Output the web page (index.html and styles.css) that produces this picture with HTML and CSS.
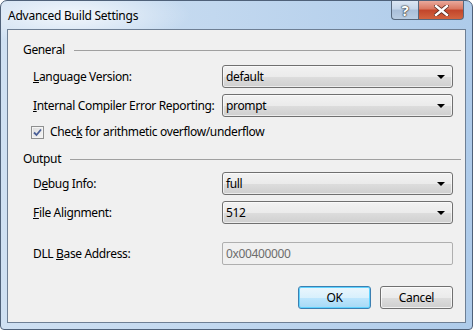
FILE: index.html
```html
<!DOCTYPE html>
<html lang="en">
<head>
    <meta charset="UTF-8">
    <title>Advanced Build Settings</title>
    <link rel="stylesheet" href="styles.css">
</head>
<body>

<div class="window">
    <div class="titlebar">
        <span class="title">Advanced Build Settings</span>
        <div class="caption-buttons">
            <span class="cap-btn help">?</span>
            <span class="cap-btn close">
                <svg width="15" height="11" viewBox="0 0 15 11">
                    <path d="M2 1 L13 10 M13 1 L2 10" stroke="#5a2a20" stroke-width="4" stroke-linecap="square"/>
                    <path d="M2 1 L13 10 M13 1 L2 10" stroke="#ffffff" stroke-width="2.4" stroke-linecap="square"/>
                </svg>
            </span>
        </div>
    </div>

    <div class="client">
        <div class="group-head general">
            <span>General</span>
            <div class="rule"></div>
        </div>

        <div class="row first">
            <label><u>L</u>anguage Version:</label>
            <div class="combo"><span>default</span><i class="arrow"></i></div>
        </div>

        <div class="row">
            <label><u>I</u>nternal Compiler Error Reporting:</label>
            <div class="combo"><span>prompt</span><i class="arrow"></i></div>
        </div>

        <div class="check-row">
            <span class="checkbox">
                <svg width="9" height="9" viewBox="0 0 9 9">
                    <path d="M1 4.5 L3.5 7 L8 1.5" fill="none" stroke="#4a5f97" stroke-width="1.8"/>
                </svg>
            </span>
            <label>Chec<u>k</u> for arithmetic overflow/underflow</label>
        </div>

        <div class="group-head output">
            <span>Output</span>
            <div class="rule"></div>
        </div>

        <div class="row first-out">
            <label>D<u>e</u>bug Info:</label>
            <div class="combo"><span>full</span><i class="arrow"></i></div>
        </div>

        <div class="row">
            <label><u>F</u>ile Alignment:</label>
            <div class="combo"><span>512</span><i class="arrow"></i></div>
        </div>

        <div class="row dll">
            <label>DLL <u>B</u>ase Address:</label>
            <div class="textbox">0x00400000</div>
        </div>

        <div class="buttons">
            <button class="btn default">OK</button>
            <button class="btn">Cancel</button>
        </div>
    </div>
</div>

</body>
</html>
```

FILE: styles.css
```css
body {
    margin: 0;
    width: 473px;
    height: 330px;
    overflow: hidden;
    font-family: "Noto Sans", "Open Sans", sans-serif;
    font-size: 12px;
    letter-spacing: -0.35px;
    line-height: 16px;
    color: #000;
    background: #fff;
}

.window {
    box-sizing: border-box;
    width: 473px;
    height: 330px;
    border: 1px solid #4f6179;
    border-radius: 7px 7px 4px 4px;
    background:
        radial-gradient(ellipse 120px 30px at 70px 14px, rgba(255, 255, 255, 0.75), rgba(255, 255, 255, 0) 100%),
        linear-gradient(to right, #cfe0f2 0%, #c2d8ef 45%, #aecbea 100%);
    display: flex;
    flex-direction: column;
    padding: 0 6px 6px 6px;
}

.titlebar {
    height: 28px;
    display: flex;
    align-items: flex-start;
    justify-content: space-between;
}

.title {
    margin-top: 7px;
    margin-left: 1px;
    letter-spacing: -0.25px;
}

.caption-buttons {
    display: flex;
    margin-right: 2px;
}

.cap-btn {
    box-sizing: border-box;
    height: 19px;
    display: flex;
    align-items: center;
    justify-content: center;
    border: 1px solid #57687d;
    border-top: none;
}

.help {
    width: 27px;
    border-radius: 0 0 0 4px;
    border-right: none;
    background: linear-gradient(to bottom, #dbe6f3 0%, #c5d6ea 45%, #a9bfd9 50%, #b9cde3 100%);
    color: #fff;
    font-weight: bold;
    font-size: 15px;
    text-shadow: 0 0 1px #333, 0 0 1px #333, 0 0 2px #333;
}

.close {
    width: 46px;
    border-radius: 0 0 4px 0;
    background: linear-gradient(to bottom, #e9a99c 0%, #d9765f 45%, #c2452a 50%, #d36440 100%);
}

.client {
    flex: 1;
    box-sizing: border-box;
    border: 1px solid #6e7f94;
    background: #f0f0f0;
    padding: 0 12px 0 0;
    display: flex;
    flex-direction: column;
}

.group-head {
    display: flex;
    align-items: center;
    padding-left: 15px;
    height: 16px;
}

.group-head.general {
    margin-top: 12px;
}

.group-head.output {
    margin-top: 11px;
}

.rule {
    flex: 1;
    height: 1px;
    background: #a0a0a0;
    margin-left: 9px;
    margin-right: -8px;
}

.row {
    display: flex;
    align-items: center;
    padding-left: 25px;
    margin-top: 6px;
}

.row.first {
    margin-top: 7px;
}

.row.first-out {
    margin-top: 5px;
}

.row.dll {
    margin-top: 18px;
}

.row label {
    width: 189px;
    white-space: nowrap;
}

.combo {
    box-sizing: border-box;
    width: 231px;
    height: 23px;
    border: 1px solid #707070;
    border-radius: 3px;
    background: linear-gradient(to bottom, #f2f2f2 0%, #ebebeb 50%, #dddddd 51%, #cfcfcf 100%);
    box-shadow: inset 0 0 0 1px rgba(255, 255, 255, 0.6);
    display: flex;
    align-items: center;
    justify-content: space-between;
    padding: 0 7px 0 3px;
}

.arrow {
    width: 0;
    height: 0;
    border-left: 4px solid transparent;
    border-right: 4px solid transparent;
    border-top: 4px solid #000;
}

.textbox {
    box-sizing: border-box;
    width: 231px;
    height: 23px;
    border: 1px solid #afafaf;
    border-radius: 2px;
    background: #f0f0f0;
    color: #6d6d6d;
    display: flex;
    align-items: center;
    padding-left: 3px;
}

.check-row {
    display: flex;
    align-items: center;
    padding-left: 23px;
    margin-top: 7px;
    height: 16px;
}

.checkbox {
    box-sizing: border-box;
    width: 13px;
    height: 13px;
    border: 1px solid #8e8f8f;
    background: linear-gradient(135deg, #dcdcdc 0%, #f6f6f6 100%);
    box-shadow: inset 0 0 0 1px #f4f4f4;
    display: flex;
    align-items: center;
    justify-content: center;
    margin-right: 6px;
}

.buttons {
    display: flex;
    justify-content: flex-end;
    gap: 9px;
    margin-top: auto;
    margin-bottom: 13px;
}

.btn {
    box-sizing: border-box;
    width: 73px;
    height: 23px;
    font-family: inherit;
    font-size: 12px;
    letter-spacing: inherit;
    color: #000;
    border: 1px solid #707070;
    border-radius: 3px;
    background: linear-gradient(to bottom, #f2f2f2 0%, #ebebeb 50%, #dddddd 51%, #cfcfcf 100%);
    box-shadow: inset 0 0 0 1px rgba(255, 255, 255, 0.7);
    padding: 0;
}

.btn.default {
    border-color: #3c7fb1;
    background: linear-gradient(to bottom, #eaf6fd 0%, #d9f0fc 50%, #bee6fd 51%, #a7d9f5 100%);
    box-shadow: inset 0 0 0 1px #5fd3ff;
}
```
